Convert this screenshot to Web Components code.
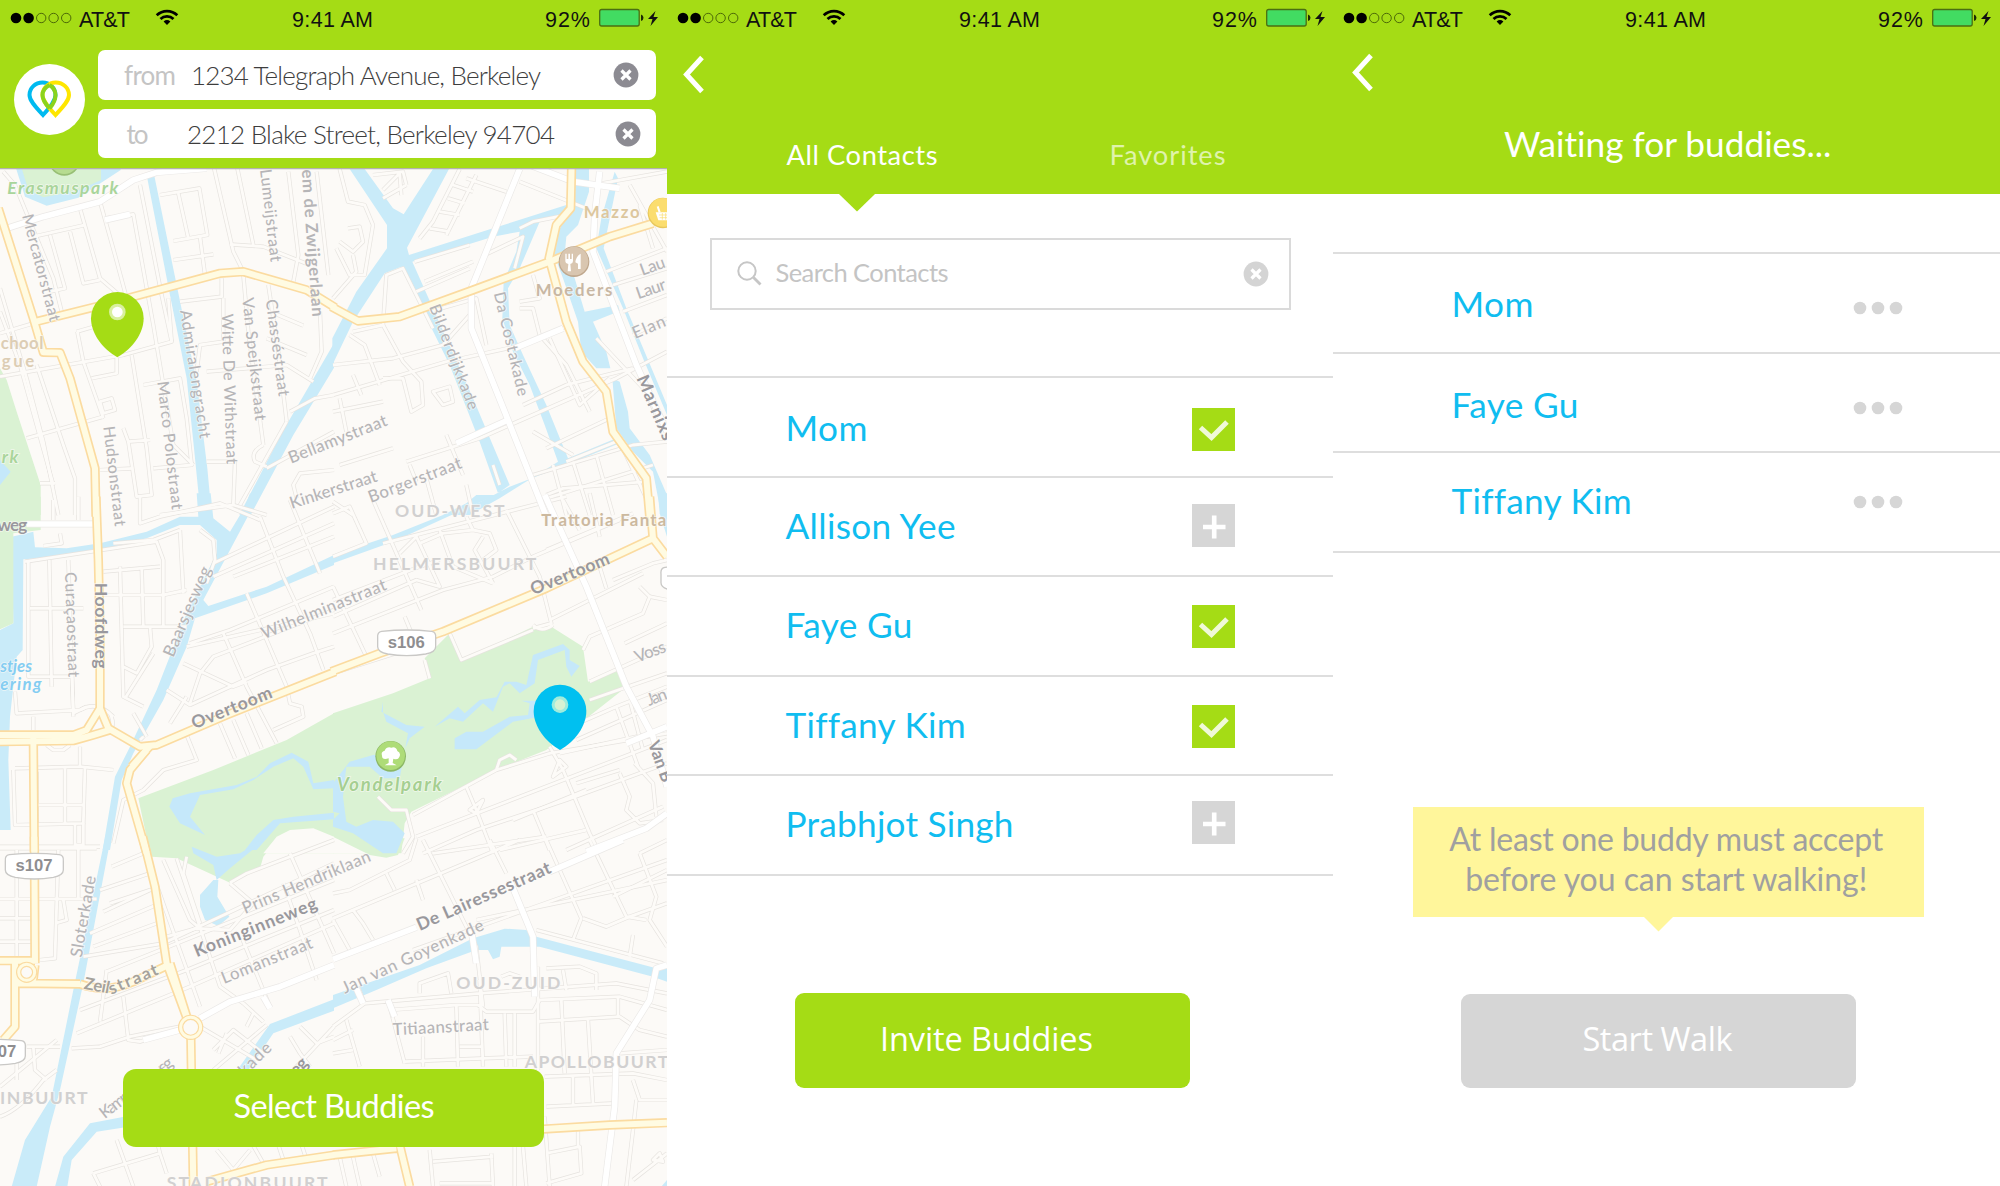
<!DOCTYPE html>
<html lang="en">
<head>
<meta charset="utf-8">
<title>Buddy walk</title>
<style>
html,body{margin:0;background:#fff}
body{width:2000px;height:1186px;overflow:hidden;font-family:Lato,"Liberation Sans",sans-serif}
</style>
</head>
<body>
<walk-app></walk-app>
<script>
const define = (name, html, setup) => {
  const t = document.createElement('template');
  t.innerHTML = html;
  customElements.define(name, class extends HTMLElement {
    constructor() {
      super();
      this.attachShadow({mode: 'open'}).append(t.content.cloneNode(true));
    }
    connectedCallback() { if (setup) setup(this, this.shadowRoot); }
  });
};

/* One line of text, tracked so that it fills the width given in w. */
define('fit-label', `<style>
  :host{display:block;white-space:nowrap;flex:none;line-height:40px}
  span{display:inline-block}
</style><span></span>`, (el, root) => {
  const s = root.querySelector('span');
  s.textContent = el.getAttribute('text');
  const w = +el.getAttribute('w');
  if (w) {
    const tune = () => {
      s.style.letterSpacing = '0';
      const n = s.getBoundingClientRect().width;
      s.style.letterSpacing = ((w - n) / (s.textContent.length - 1)) + 'px';
    };
    tune();
    document.fonts.ready.then(tune);
    el.style.width = w + 'px';
  }
});

define('status-bar', `<style>
  :host{display:flex;height:40px;align-items:flex-start;font:21.500px "Liberation Sans",sans-serif;color:#111;box-sizing:border-box}
  svg{display:block;flex:none}
</style>
<svg width="79" height="40"><circle cx="16" cy="18" r="5.3" fill="#000"/><circle cx="28.6" cy="18" r="5.3" fill="#000"/>
<g fill="none" stroke="#4d6a08" stroke-width="1"><circle cx="41.2" cy="18" r="4.7"/><circle cx="53.6" cy="18" r="4.7"/><circle cx="66.2" cy="18" r="4.7"/></g></svg>
<fit-label text="AT&amp;T" w="51"></fit-label>
<svg width="162" height="40"><g transform="translate(37 22)" fill="none" stroke="#000" stroke-width="2.7"><path d="M-10.3 -6.7A14.8 14.8 0 0 1 10.3 -6.7M-6.5 -3A9.2 9.2 0 0 1 6.5 -3"/><path d="M-3.4 -.6Q0 -3.3 3.4 -.6L0 3Z" fill="#000" stroke="none"/></g></svg>
<fit-label text="9:41 AM" w="81"></fit-label>
<svg width="172" height="40"></svg>
<fit-label text="92%" w="45"></fit-label>
<svg width="76" height="40"><rect x="9.7" y="9.5" width="39.500" height="16.500" rx="2" fill="#42dc62" stroke="#4a6f12" stroke-width="1.3"/><path d="M51 14.5v6.500q2.500-.5 2.500-3.200t-2.500-3.300Z" fill="#1c2a04"/><path d="M65.500 11l-7.500 8h4.500l-2 7 7.500-9h-4.500Z" fill="#111"/></svg>`);

define('clear-icon', `<style>:host{display:block;flex:none;width:26px;height:26px}svg{display:block}</style>
<svg width="26" height="26"><circle cx="13" cy="13" r="12.400" fill="currentColor"/><path d="M8.500 8.500l9 9M17.500 8.500l-9 9" stroke="#fff" stroke-width="3.200"/></svg>`);

define('back-button', `<style>:host{display:block;width:40px;height:40px}svg{display:block}</style>
<svg width="40" height="40"><path d="M29 2.500L13.500 19.500 29 36.500" fill="none" stroke="#fff" stroke-width="5"/></svg>`);

define('action-button', `<style>
  :host{display:flex;justify-content:center;align-items:center;box-sizing:border-box;color:#fff;background:var(--fill,#a5dc15);border-radius:var(--r,9px)}
</style><slot></slot>`);

define('address-field', `<style>
  :host{display:flex;height:49.500px;box-sizing:border-box;background:#fff;border-radius:7px;font-size:26px;align-items:flex-start}
  .k{color:#c4c4c4;font-weight:400}
  .v{color:#3d3d3d;font-weight:300}
  clear-icon{color:#8c8b92}
</style><fit-label class="k"></fit-label><fit-label class="v"></fit-label><clear-icon></clear-icon>`, (el, root) => {
  const d = JSON.parse(el.getAttribute('data'));
  const [k, v, c] = root.querySelectorAll('.k,.v,clear-icon');
  k.setAttribute('text', d.k); k.setAttribute('w', d.kw);
  v.setAttribute('text', d.v); v.setAttribute('w', d.vw);
  k.style.margin = '5px 0 0 ' + d.kx + 'px';
  v.style.margin = '5px 0 0 ' + d.vx + 'px';
  c.style.margin = '12px 0 0 ' + d.cx + 'px';
  k.replaceWith(k.cloneNode()); v.replaceWith(v.cloneNode());
});

define('walk-logo', `<style>:host{display:block;width:71px;height:71px;border-radius:50%;background:#fff}svg{display:block}</style>
<svg width="71" height="71" viewBox="14.500 64 71 71" fill="none" stroke-width="4">
<path d="M43.500 115C37 108 30 101 30 95A13 12.500 0 0 1 56 95C56 101 50 108 43.500 115Z" stroke="#00baf0"/>
<path d="M56 115C49.500 108 43 101 43 95A13.200 12.500 0 0 1 69.500 95C69.500 101 62.500 108 56 115Z" stroke="#fee600"/>
<path d="M50 85C45.500 87.500 43 91 43 95C43 99 46 104 50 108.500M50 85C54 87.500 56 91 56 95C56 99 54 104 50 108.500" stroke="#8bd31c"/></svg>`);

/* ---- map ---- */
const TILES = [
 {x:0,y:165,
  water:['M45 0L75 95 140 122 235 98 362 15V0Z','M441 35L463 32 532 370 590 650 622 910 635 1050H602L582 850 560 640 508 380Z','M1002 535V608L880 810 752 1050H718L845 805Z'],
  park:['M62 0L85 75 130 97 230 78 303 45V0Z','M0 610L20 645 50 740 122 960V1050H0Z'],
  pwater:['M0 885L32 920 0 960Z'],
  minor:['M10 20L45 60 160 340 190 460','M240 130L300 340 370 400','M300 110L345 270 380 400','M100 215L255 180M150 210L195 370 150 380M210 200L250 355 300 345','M315 160L400 148 460 480 520 840 580 900','M420 60L485 390 515 530','M480 90L598 70 622 210 520 228M535 85L565 220','M600 215L615 330M520 285L640 268','M640 0L700 260 725 310','M710 0L760 240M690 238L790 245 930 300','M865 20L895 270 880 350M950 20L985 330','M540 410L665 395V340M730 330L745 500 790 840','M805 360L835 560 860 770','M810 440L910 482M800 520L920 570','M0 505L100 475M0 635L370 570 515 530 505 400','M230 500L300 480M232 500L250 590 310 760','M275 640L350 625V575M300 710L335 700 345 735 310 745Z','M80 820L310 755M0 370L80 640 130 830 175 1050','M110 600L190 840 225 940V1050','M395 570L440 850 455 990 410 995 385 830 370 790M385 830L450 825','M430 660L540 640 560 760 575 900 460 910','M300 915L400 910M480 1050L700 1020 800 1050','M620 890H705L700 1020','M620 620L860 600 940 650','M790 840Q750 860 765 890L800 905','M870 740L945 700 1002 690M800 910L1002 800','M890 1000L880 960 900 925 1002 915','M860 770L720 1020','M120 955H165M0 440L60 600 160 960','M590 620L600 540 670 530V400','M930 640L965 560 960 440'],
  white:['M20 190L130 155 300 110 400 45 470 22 620 10','M315 165L390 148'],
  yellow:['M-5 130L100 460 130 562 180 563 210 640 285 910 288 1055','M100 472L300 422 660 325 730 320 920 375 1006 428'],
 },
 {x:333,y:165,
  water:['M50 12H95L180 130 212 148 300 12H348L222 248 228 270 480 190 700 120 706 145 620 170 560 310 525 370 530 480 570 570 640 720 705 880 850 820 860 835 700 900 530 965 440 1012 330 1050H410L500 1000 675 890 635 780 590 660 540 560 508 460 512 350 550 260 560 200 480 215 238 290 420 700 530 960 495 985 440 830 350 600 205 305 155 325 60 470 -2 600V520L70 380 162 250V180Z','M725 12H768V80L735 180 700 215 695 270 725 340 755 440 855 420 860 438 780 470 820 560 832 610 790 610 745 560 735 470 690 340 660 260 675 200 720 120Z','M845 20L805 160 790 250 870 430 930 580 1002 750V720L880 430 812 250 855 40Z','M838 640L860 650 885 740 890 790 950 870 1002 990V1050H985L960 920 900 860 850 790Z'],
  minor:['M20 12L45 110 95 120 120 180 95 330 50 330 10 250M45 190L80 185 90 230 60 260 20 230','M120 30L210 20 220 60M150 75L200 25 205 90M150 100L220 60','M380 12L300 170 260 220M430 30L340 210M360 60L420 80M345 100L395 115M320 140L380 150M290 190L350 200M400 40L520 80','M250 380L410 310M245 290L410 240','M275 350L420 290M455 270L570 215 545 310','M0 400L70 320 60 270M60 500L150 480 160 330 210 310 300 490','M150 480L210 590 265 650 270 720 235 740 210 640 150 640','M0 690L340 590 570 540M50 510L95 540 140 660M0 600L180 580 330 540 410 450','M290 440L430 400 460 540','M0 740L150 710M20 700L40 800M60 630L85 690M300 680L350 665 360 710 330 720Z','M20 900L180 850M220 890L440 820 850 640 1002 560','M340 810L390 930M230 900L250 950M560 190L600 170 700 150M600 330L620 400 560 410','M540 550L700 485M560 430L600 430 620 510 700 600 770 740','M650 520L740 720 830 640M570 720L700 660 900 610','M640 850L830 760M600 800L720 870M700 890L850 830M600 930L900 840 1002 830','M820 320L1002 250M840 360L1002 310M870 440L1002 390M900 510L1002 460M790 520L940 680 1002 830','M780 60L1002 20M890 60L1002 260M920 120L960 250M560 50L760 130','M660 900L700 1050M720 890L770 1050M790 870L840 1050M860 830L940 1000M640 1000L960 900M400 960L420 1050M280 940L310 1050M0 1010L60 1050M480 900L500 960','M640 990L690 970 940 950'],
  white:['M560 12L415 370 415 490 525 765 640 1055','M590 0L720 50 860 70M370 835L525 765','M800 20L785 150 780 260 910 600 1002 800','M545 550L690 490'],
  yellow:['M716 0L713 130 670 180 648 280 700 470 750 590 820 680 840 800 940 940 950 1055','M-5 425L75 468 200 455 420 375 650 290 830 215 960 175'],
 },
 {x:0,y:500,
  water:['M35 110L100 95 105 142 200 145 300 130 440 95 540 50 595 50 590 -20H632L640 55 690 95 735 20 750 -20 775 -10 690 150 610 300 625 318 800 260 1002 165V195L800 280 585 355 560 440 490 600 400 760 365 840 330 1050H308L345 830 390 740 470 570 560 340 650 160V120L600 75 540 75 440 115 300 150 200 170 70 178 68 450 50 470 30 650 25 780 32 990H0V390L40 370Z'],
  park:['M0 -10H122V90L40 100V370L0 388Z','M415 895L640 810 860 720 1002 640V1060H450Z'],
  pwater:['M518 895L570 880 710 855 770 830 810 790 875 758 925 785 940 850 1002 840V865L940 868 910 800 880 775 820 800 760 840 700 868 600 885 570 950 615 1005 540 970 508 920Z','M1002 938L880 950 820 960 770 1005 735 1050H770L840 970 1002 958Z'],
  bg:['M790 1060L830 1010 870 990 940 985 1002 1010V1060Z'],
  minor:['M75 185L470 125 490 180 490 380','M85 180V530H215M148 180L155 560M205 180L220 650M90 325H250','M160 0V60M235 -10V60M45 575L50 640 240 630M215 500L220 640 260 620','M310 215L480 200M360 200L370 590 430 620M425 200L430 380M370 380H560M310 285H490L560 270','M370 500L410 520 455 440 450 380M375 595L460 460','M540 90L550 280M340 130L460 120 540 90M180 100L185 130 130 138','M420 -10V70L480 50 660 10 780 60','M780 50L850 230 930 400 970 510M870 0L910 100 960 220M740 280L860 560 870 610 905 620 910 650 820 690','M670 400L740 560 830 730M700 230L1002 110M640 230L1002 70M640 190L1002 20M570 430L690 390 1002 260M560 440L1002 340','M550 490L700 560 740 545M500 570L570 615 800 510 940 460 1002 440','M570 610L600 520 640 470 1002 330M510 670L560 590M660 670L705 775M700 660L745 765M740 640L785 745','M560 705L590 780 490 810 430 870 370 900 340 1030','M45 805L240 800 340 810M240 740V800M255 800L250 970 45 975 40 810M110 815V970M110 915H255M195 800V970M0 1040H300','M225 970V1035H250V970M100 650V690M140 735L160 750 190 750 210 735','M430 710L420 720M400 640L440 710M600 90L640 120 645 180 620 250','M330 640Q350 680 320 700M240 630Q290 600 340 650'],
  white:['M80 72H285'],
  yellow:['M288 -10L295 180 300 400 300 625M0 705H220L260 690 300 625 325 685 420 740 470 735 680 645 1006 515M0 725L220 722 280 705 330 690M440 750L390 810 380 850 440 1060','M450 738L395 800M100 710L103 1055'],
 },
 {x:333,y:500,
  water:['M0 165L180 105 330 45 400 10 430 -15H490L400 25 180 125 0 190Z','M975 -20L1002 -20V110L980 40Z'],
  park:['M0 640L180 580 290 535 275 475 350 400 390 480 600 380 655 380 750 440 765 545 855 505 875 565 640 750 490 810 235 935 215 970 205 1060H0Z'],
  pwater:['M150 605L145 635 220 675 275 680 230 715 210 760 120 765 50 785 0 850V935L20 940 0 960V980L60 1000 150 1060H190L215 1000 180 965 120 960 70 980 40 965 30 890 40 800 110 800 150 835 200 835 225 700 160 665 150 635Z','M305 680L375 620 395 640 440 600 490 592 515 545 550 545 580 555 600 465 690 432 710 450 710 480 740 498 715 530 700 500 695 450 615 480 605 550 560 580 530 550 510 560 480 635 450 610 390 665 350 655Z','M365 715L400 695 450 695 530 650 585 645 590 610 565 602H620V650L540 665 430 748H365Z'],
  bg:['M0 1010L100 1060H0Z'],
  minor:['M0 40L50 20 100 130 0 170M120 0L230 250 265 330M0 260L100 470M215 350L240 410M0 350L250 240 320 260 250 110 200 160','M0 300L260 200 320 180M0 400L330 270 480 230 600 170 860 60','M520 30L620 230 655 370 600 385M400 50L420 90 470 100 490 150 450 180M260 130L330 100 420 90','M450 110L425 150 480 250M320 90L360 200 480 250M150 130L700 -10','M770 -20L800 110M690 0L740 90M640 150L900 40','M350 400L385 480 600 390M275 480L290 535M600 375Q625 400 660 375','M650 360L930 220M750 450L770 410 930 340 950 290 920 260M800 200L820 265M840 240L960 190 1002 180','M875 430L1002 370M770 545L1002 440M770 600L870 565 1002 520','M950 290L1002 300','M690 690L850 620 1002 560M730 720L1002 600M680 760L1002 690M850 620L915 800M890 600L930 750','M490 810L500 780 530 765 550 780','M650 740L690 810 770 1000 800 1060M660 830L700 800 680 780Z','M400 860L430 930 480 1060M410 930L450 900 430 940Z','M240 945L490 810 650 760 1002 700','M250 1010L1002 720M270 1060L430 990 700 900 1002 790','M600 930L650 1050M860 820L890 890 880 930 920 970 990 960M540 960L760 870M700 1050L990 920','M905 790L960 850 970 950M730 850L860 810','M135 890L175 930 220 930 240 1010 210 1060M500 1050L760 990M0 520L250 440'],
  white:['M635 -15L760 260 880 560 960 710 1002 860','M760 1055L940 985 1002 940','M880 730L1002 680'],
  yellow:['M-5 515L140 460 330 395 640 265 960 115 1002 170M950 -10L960 115'],
 },
 {x:0,y:840,
  water:['M315 -5H332L250 430 180 750 150 860 110 1040H35L75 900 155 770 220 450Z','M640 120H655L652 170 688 230 655 258 615 240 600 200V165Z','M1002 478V512L820 580 745 690H712L810 552Z','M400 825L270 850 190 950 165 1040H202L215 960 290 875 400 858Z'],
  park:['M445 -10L455 50 530 55 690 128 780 85 790 50 830 0V-10Z'],
  pwater:['M575 20L650 50 720 40 770 10 780 -5H800L690 85 650 120 640 75 580 40Z'],
  minor:['M0 25H290M50 30V360M175 30L165 355 120 360M0 177H290M0 235H110M0 305H110M235 25V175M190 180L200 240 165 250','M335 80L430 40M310 215L450 150 330 190M300 150L450 100M280 320L470 250M270 280L480 190M250 350L490 310 1002 70M320 395L1002 120M320 390L300 545M240 510L560 390 1002 210M230 580L570 440 1002 250','M215 625L300 620 390 590 540 560M370 470L385 600 420 605 530 570M490 60L570 240 600 265M530 55L660 440 730 490 790 545','M500 290L590 265 690 270 760 190 690 130','M560 50L550 100 600 250M720 280L810 500M900 270L950 420M440 50L600 500','M850 130L900 270M870 40L1002 340M690 128L740 100 1002 0','M600 560L770 660M640 630L700 570 790 640M655 640L680 580M740 560L760 520M800 555L640 690','M870 590L900 640 930 680M900 560L950 610 1002 590M880 690L1002 560M650 930L700 990 750 930M750 900L790 970','M50 620V720M100 620L105 690 140 720M80 620H180M0 830Q60 810 130 720L170 690M280 1000L480 940 470 900M280 1000L300 1040M350 900L400 1040M480 940L500 1000','M830 900L850 960M900 900L920 960','M0 740L170 600'],
  white:['M600 535L690 485 840 440 1002 375','M430 600L540 570','M790 470L810 505'],
  yellow:['M103 -10L105 370M0 362H105M45 365V560L10 600M50 430L240 432M105 375L100 415 60 415 45 380M240 432Q320 460 400 425L505 375M428 -10L465 140 500 370 570 560M570 560L510 370M572 560L580 1040M620 1025L800 975 1002 945'],
  ring:[[572,562,30],[80,397,24]],
 },
 {x:333,y:840,
  water:['M0 465L260 375 420 295 515 266 580 270 610 290 990 390 1002 375V425L960 410 620 320 505 320 500 350 480 358 465 330 430 330 280 385 130 450 0 505Z','M985 1040L1002 1020V1040Z'],
  park:['M0 -5H215L195 45 160 53 110 45 0 -3Z'],
  pwater:['M80 -5H208L180 35 150 5Z'],
  minor:['M0 160L50 150 230 60 250 -5M270 0L400 260 430 320 450 500M470 0L520 100M640 0L745 235 720 300M770 0L880 230 940 240M0 235L420 60 560 0M240 330L1002 60M430 240L1002 120M60 210L90 250 120 300M160 100L185 150M250 120L270 180M0 240L50 330M300 40L640 -10','M920 40L970 170 950 240 1002 320M750 235L820 260 890 230 1002 190M900 285L890 350M610 270L990 370','M920 40L1002 0M840 170L1002 90','M75 440L95 490 0 560M95 490L440 460 850 430 1002 460M165 480L215 670M40 540L80 680M170 510L370 495 435 495 460 515H600L620 480 860 470 1002 510M260 460V430L345 400 355 460M440 420L450 680M505 410L530 400 560 410','M615 380V690M640 385L740 380 790 400V450M690 390L700 450M615 545L860 530 920 570 1002 590M855 470V530M685 480L695 700M765 540L780 790M370 495L375 680M515 520L520 680M545 520V680M215 665L450 655 600 650M380 620H450M270 590V680M635 710L900 700 1002 720M640 800L840 790M720 710V795M0 640L60 630M0 600L60 570','M0 950L160 930M20 950L40 1040M60 950L80 1040M120 940L140 1010M290 930L300 1040M300 965L480 950M475 940L480 1040M320 1030H480M545 920V1040M570 920L580 1040M640 940L740 920 745 1000 640 1030M635 830L650 1040M735 860V920M900 720L920 780H1002M910 780L900 870 880 1040M860 640L1002 630','M900 1020L1002 940M980 940L960 960 990 965Z'],
  white:['M0 358L250 262M650 95L870 0','M530 120L600 290 605 470','M1002 375L970 385 950 480 850 640 845 800 815 1040','M70 445L90 490M165 480L185 530','M415 270L430 370'],
  yellow:['M620 868L830 855 1002 848M0 945L190 925M200 915L230 1040'],
 },
];
/* tile, text, x1,y1 → x2,y2 of the baseline (tile units), size, weight, colour, style */
const G='#b6b5b7',D='#99989d',P='#d1d0d0';
const LABELS = [
 [0,'Erasmuspark',22,88,355,88,44,700,'#a9d59b','italic'],
 [0,'Mercatorstraat',66,152,150,472,40,400,G],
 [0,'Lumeijstraat',780,14,812,292,40,400,G],
 [0,'em de Zwijgerlaan',905,14,937,456,42,700,G],
 [0,'Admiralengracht',540,437,600,822,40,400,G],
 [0,'Chasséstraat',797,405,836,695,40,400,G],
 [0,'Van Speijkstraat',727,400,766,768,40,400,G],
 [0,'Witte De Withstraat',665,447,680,898,40,400,G],
 [0,'Marco Polostraat',472,650,516,1035,40,400,G],
 [0,'Hudsonstraat',310,785,345,1085,40,400,G],
 [0,'Bellamystraat',873,896,1165,780,42,400,G],
 [0,'Kinkerstraat',875,1032,1135,948,42,400,G],
 [0,'chool',2,552,130,552,42,700,'#dccdb4'],
 [0,'gue',5,605,103,605,42,700,'#dccdb4'],
 [0,'rk',5,894,55,894,44,700,'#a9d59b','italic'],
 [1,'Mazzo',752,160,920,160,42,700,'#dcc79e'],
 [1,'Moeders',608,394,838,394,42,700,'#c8b7a3'],
 [1,'Lau',928,332,1000,306,42,400,G],
 [1,'Laur',916,403,1002,373,42,400,G],
 [1,'Elan',906,522,1002,482,42,400,G],
 [1,'Da Costakade',482,385,556,696,40,400,G],
 [1,'Bilderdijkkade',288,425,408,738,40,400,G],
 [1,'Marnixs',910,640,992,830,44,700,D],
 [1,'Borgerstraat',113,1014,390,908,42,400,G],
 [2,'weg',-8,94,82,94,44,700,D],
 [2,'Curaçaostraat',195,217,205,532,40,400,G],
 [2,'Hoofdweg',285,248,285,506,44,700,D],
 [2,'Baarsjesweg',520,474,634,208,42,400,G],
 [2,'Wilhelminastraat',792,418,1163,268,42,400,G],
 [2,'stjes',1,516,96,516,42,700,'#84cdf2','italic'],
 [2,'ering',1,570,124,570,42,700,'#84cdf2','italic'],
 [2,'Overtoom',583,688,820,592,44,700,D],
 [3,'OUD-WEST',186,50,515,50,44,400,P,'w'],
 [3,'HELMERSBUURT',120,210,610,210,44,400,P,'w'],
 [3,'Trattoria Fanta',625,77,1000,77,42,700,'#ccb99f'],
 [3,'Overtoom',601,286,834,190,44,700,D],
 [3,'Voss',913,488,1002,454,42,400,G],
 [3,'Jan',948,618,1006,596,42,400,G],
 [3,'Van B',944,730,988,850,42,700,D],
 [3,'Vondelpark',12,872,326,872,46,700,'#a5cf91','italic'],
 [4,'Prins Hendriklaan',735,222,1116,62,42,400,G],
 [4,'Koninginneweg',590,352,955,205,44,700,D],
 [4,'Lomanstraat',672,432,942,322,42,400,G],
 [4,'Sloterkade',245,354,288,110,42,400,G],
 [4,'Zeil',250,446,326,461,42,700,'#a5a29b'],
 [4,'straat',334,464,478,402,42,700,'#a5a29b'],
 [4,'Kamperfoelieweg',314,838,523,675,42,400,G],
 [4,'kade',735,710,818,627,42,400,G],
 [4,'weg',862,740,928,672,44,700,D],
 [4,'INBUURT',0,791,263,791,44,400,P,'w'],
 [4,'STADIONBUURT',500,1047,983,1047,44,400,P,'w'],
 [5,'De Lairessestraat',260,273,658,97,44,700,D],
 [5,'Jan van Goyenkade',35,462,456,268,42,400,G],
 [5,'OUD-ZUID',370,447,682,447,44,400,P,'w'],
 [5,'Titiaanstraat',180,586,468,570,42,400,G],
 [5,'APOLLOBUURT',575,685,1006,685,44,400,P,'w'],
];

define('street-map', `<style>
  :host{display:block;overflow:hidden}
  svg{display:block;font-family:Lato,sans-serif}
  path{stroke-linejoin:round}
</style><div></div>`, (el, root) => {
  const at = t => `transform="translate(${t.x} ${t.y}) scale(.33333)"`;
  const layer = (key, attrs) => TILES.map(t => (t[key] || []).length
    ? `<g ${at(t)} ${attrs}>` + t[key].map(d => `<path d="${d}"/>`).join('') + '</g>' : '').join('');
  const line = (key, c, w) => layer(key, `fill="none" stroke="${c}" stroke-width="${w}"`);
  let s = '<rect y="160" width="667" height="1030" fill="#fcfaf7"/>';
  s += layer('water', 'fill="#c9ebf9"') + layer('park', 'fill="#daf2d3"') + layer('pwater', 'fill="#c5e8fa"') + layer('bg', 'fill="#fcfaf7"');
  s += line('minor', '#e6e3df', 12.5) + line('minor', '#fdfbf8', 8.5);
  s += line('white', '#ebe9e7', 21) + line('white', '#fff', 17);
  s += line('yellow', '#fbdba0', 28) + line('yellow', '#fffbe2', 18);
  for (const t of TILES) for (const [x, y, r] of t.ring || [])
    s += `<g ${at(t)}><circle cx="${x}" cy="${y}" r="${r}" fill="#fcfaf7" stroke="#fbdba0" stroke-width="16"/><circle cx="${x}" cy="${y}" r="${r}" fill="none" stroke="#fffbe2" stroke-width="9"/></g>`;
  const disc = (i, x, y, c, e, glyph) => `<g ${at(TILES[i])}><circle cx="${x}" cy="${y + 2}" r="46" fill="${e}"/><circle cx="${x}" cy="${y}" r="43" fill="${c}"/><g transform="translate(${x} ${y})" fill="#fff">${glyph}</g></g>`;
  s += disc(0, 193, -16, '#b6dc90', '#98bf75', '');
  s += disc(1, 990, 142, '#fbdd6e', '#e8c75c', '<path d="M-22 0H26L20 24H-14Z"/><path d="M-10 0L-16 -18" stroke="#fff" stroke-width="6"/><path d="M-12 8H20M-10 16H18M-2 2V22M8 2V22" stroke="#fbdd6e" stroke-width="2"/>');
  s += disc(1, 723, 288, '#d9c6b0', '#bfa78d', '<path d="M-26 -22h4v16h5v-16h5v16h5v-16h4v22q0 7-8 9l2 22h-10l2-22q-9-2-9-9ZM20 -22V24H12V8L4 4Q6-14 20-22Z"/>');
  s += disc(3, 173, 767, '#aedc78', '#8cb765', '<path d="M-6 8Q-26 14-26 0Q-30-12-18-15Q-12-28 2-24Q16-28 20-14Q32-8 26 4Q22 14 8 9L6 22 18 29H-18L-6 22Z"/>');
  s += LABELS.map(([i, text, x1, y1, x2, y2, size, weight, color, style]) => {
    const a = Math.atan2(y2 - y1, x2 - x1) * 180 / Math.PI, n = Math.hypot(x2 - x1, y2 - y1);
    const wt = style === 'w' ? 700 : weight === 400 ? 500 : weight;
    return `<g ${at(TILES[i])}><text transform="translate(${x1} ${y1}) rotate(${a.toFixed(2)})" textLength="${n.toFixed(1)}" font-size="${(size * 1.2).toFixed(1)}" font-weight="${wt}" ${style === 'italic' ? 'font-style="italic"' : ''} fill="${color}" stroke="#fcfaf7" stroke-width="5" stroke-opacity=".7" paint-order="stroke">${text}</text></g>`;
  }).join('');
  const shield = (i, x, y, w, text, tx) => `<g ${at(TILES[i])}><path d="M${x + 12} ${y}Q${x + w / 2} ${y - 8} ${x + w - 12} ${y}Q${x + w + 2} ${y + 2} ${x + w} ${y + 20}V${y + 46}Q${x + w} ${y + 62} ${x + w - 30} ${y + 68}Q${x + w / 2} ${y + 78} ${x + 30} ${y + 68}Q${x} ${y + 62} ${x} ${y + 46}V${y + 20}Q${x - 2} ${y + 2} ${x + 12} ${y}Z" fill="#fff" stroke="#c9c8c6" stroke-width="4"/>${text && `<text x="${tx}" y="${y + 50}" text-anchor="middle" font-family="Liberation Sans" font-weight="700" font-size="50" fill="#8f8e90">${text}</text>`}</g>`;
  s += shield(3, 134, 394, 174, 's106', 220) + shield(4, 16, 44, 174, 's107', 102) + shield(4, -98, 602, 174, '07', 21) + shield(3, 984, 202, 174, '', 0);
  const pin = (i, x, y, c, ring, dot) => `<g ${at(TILES[i])}><path d="M${x} ${y + 117}C${x - 45} ${y + 92} ${x - 79} ${y + 45} ${x - 79} ${y}A79 79 0 0 1 ${x + 79} ${y}C${x + 79} ${y + 45} ${x + 45} ${y + 92} ${x} ${y + 117}Z" fill="${c}"/><circle cx="${x}" cy="${y - 19}" r="25" fill="${ring}"/><circle cx="${x}" cy="${y - 19}" r="16" fill="${dot}"/></g>`;
  s += pin(0, 352, 460, '#a5dc15', '#d9f0a0', '#fff') + pin(3, 681, 633, '#00c0f0', '#a0ecdd', '#d9f2d3');
  s += '<path d="M0 168.500H667" stroke="#b3b3ad" stroke-width="1.500"/>';
  root.querySelector('div').innerHTML = `<svg width="667" height="1018" viewBox="0 168 667 1018">${s}</svg>`;
});

define('route-screen', `<style>
  :host{display:grid;grid-template-rows:168px 1018px;width:667px;height:1186px;overflow:hidden}
  header{background:#a5dc15}
  .top{display:flex;margin-top:10px}
  walk-logo{margin:14px 0 0 13.500px}
  .fields{display:flex;flex-direction:column;gap:9px;width:558px;margin-left:13.500px}
  main{display:grid}
  street-map,action-button{grid-area:1/1}
  action-button{--r:13px;width:421px;height:78px;margin:901px 0 0 123px;font-size:32.500px;padding:0 0 4px 1px}
</style>
<header><status-bar></status-bar><div class="top"><walk-logo></walk-logo><div class="fields">
<address-field data='{"k":"from","kw":52,"kx":26,"v":"1234 Telegraph Avenue, Berkeley","vw":350,"vx":15,"cx":71.500}'></address-field>
<address-field data='{"k":"to","kw":22,"kx":28.500,"v":"2212 Blake Street, Berkeley 94704","vw":368,"vx":38.500,"cx":60}'></address-field>
</div></div></header>
<main><street-map></street-map><action-button><fit-label text="Select Buddies" w="201"></fit-label></action-button></main>`);

define('contact-row', `<style>
  :host{display:flex;height:99.500px;box-sizing:border-box;border-top:2.500px solid #dedede;align-items:flex-start;font-size:35.200px;color:#10bdf0}
  svg{display:block;flex:none}
  .space{flex:1}
</style><fit-label></fit-label><span class="space"></span><svg></svg>`, (el, root) => {
  const g = k => el.getAttribute(k);
  const old = root.querySelector('fit-label'), label = document.createElement('fit-label');
  label.setAttribute('text', g('name')); label.setAttribute('w', g('w'));
  label.style.margin = `${g('ty')}px 0 0 118.5px`;
  old.replaceWith(label);
  const svg = root.querySelector('svg'), kind = g('kind');
  svg.style.margin = `${g('iy')}px ${kind === 'wait' ? 97 : 98.5}px 0 0`;
  svg.setAttribute('width', kind === 'wait' ? 50 : 43);
  svg.setAttribute('height', kind === 'wait' ? 14 : 43);
  svg.innerHTML = kind === 'wait'
    ? '<g fill="#d6d6d6"><circle cx="7" cy="7" r="6.3"/><circle cx="25" cy="7" r="6.3"/><circle cx="43" cy="7" r="6.3"/></g>'
    : kind === 'on'
    ? '<rect width="43" height="43" fill="#a5dc15"/><path d="M8.500 19.500L19.500 29.500 35 14" fill="none" stroke="#f0f9d8" stroke-width="5"/>'
    : '<rect width="43" height="43" fill="#d6d6d6"/><path d="M11 23H33.500M22.200 11.500V34.500" stroke="#fff" stroke-width="4.600"/>';
});

define('contacts-screen', `<style>
  :host{display:flex;flex-direction:column;width:666px;height:1186px;background:#fff;overflow:hidden}
  header{background:#a5dc15;height:193.500px;flex:none}
  back-button{margin:15px 0 0 6px}
  .tabs{display:flex;font-size:27.300px;color:#fff;margin:40px 0 0 119.500px}
  .off{color:#dff3ab;margin-left:172px}
  .arrow{display:block;margin-left:172px;flex:none}
  .search{display:flex;align-items:flex-start;box-sizing:border-box;flex:none;width:581px;height:71.500px;margin:26.500px 0 0 43px;border:2px solid #dadada;color:#c4c4c4;font-size:25.500px}
  .search fit-label{margin:12px 0 0 11.500px}
  .search clear-icon{margin:20.500px 0 0 294px;color:#d4d4d4}
  .list{margin-top:66.500px;border-bottom:2.500px solid #dedede}
  action-button{width:395px;height:94.500px;margin:117.500px 0 0 128px;font:32.500px "Open Sans","Noto Sans",sans-serif;padding:0 12px 3px 0;flex:none}
</style>
<header><status-bar></status-bar><back-button></back-button>
<div class="tabs"><fit-label text="All Contacts" w="151"></fit-label><fit-label class="off" text="Favorites" w="116"></fit-label></div></header>
<svg class="arrow" width="36" height="18"><path d="M0 0H36L18 17.500Z" fill="#a5dc15"/></svg>
<div class="search"><svg width="52" height="60"><circle cx="35" cy="31" r="8.700" fill="none" stroke="#c6c6c6" stroke-width="2"/><path d="M41.500 37.500L48.500 44.500" stroke="#c6c6c6" stroke-width="2.800"/></svg><fit-label text="Search Contacts" w="173"></fit-label><clear-icon></clear-icon></div>
<div class="list">
<contact-row name="Mom" w="82" ty="29" iy="30" kind="on"></contact-row>
<contact-row name="Allison Yee" w="170" ty="27" iy="26.500" kind="off"></contact-row>
<contact-row name="Faye Gu" w="127" ty="27" iy="28" kind="on"></contact-row>
<contact-row name="Tiffany Kim" w="179" ty="27" iy="28.500" kind="on"></contact-row>
<contact-row name="Prabhjot Singh" w="228" ty="27" iy="25" kind="off"></contact-row>
</div>
<action-button><fit-label text="Invite Buddies" w="213"></fit-label></action-button>`);

define('waiting-screen', `<style>
  :host{display:flex;flex-direction:column;width:667px;height:1186px;background:#fff;overflow:hidden}
  header{background:#a5dc15;height:193.500px;flex:none}
  back-button{margin:13px 0 0 9px}
  h1{margin:30px 0 0 171px;font:400 35.200px Lato,sans-serif;color:#fff}
  .list{margin-top:58.500px;border-bottom:2.500px solid #dedede}
  .tip{display:flex;flex-direction:column;flex:none;align-items:center;box-sizing:border-box;width:510.500px;height:110px;margin:254px 0 0 80px;background:#fff69b;color:#a0a0a0;font-size:32px;padding:12.500px 4px 0 0}
  .tip fit-label{line-height:39.500px}
  .arrow{display:block;margin-left:311px;flex:none}
  action-button{--fill:#d6d6d6;width:395px;height:94.500px;margin:62px 0 0 128px;font:32.500px "Open Sans","Noto Sans",sans-serif;padding:0 2px 4px 0;flex:none}
</style>
<header><status-bar></status-bar><back-button></back-button><h1><fit-label text="Waiting for buddies..." w="328"></fit-label></h1></header>
<div class="list">
<contact-row name="Mom" w="82" ty="28.500" iy="47" kind="wait"></contact-row>
<contact-row name="Faye Gu" w="127" ty="30" iy="47" kind="wait"></contact-row>
<contact-row name="Tiffany Kim" w="179" ty="26.500" iy="41.500" kind="wait"></contact-row>
</div>
<div class="tip"><fit-label text="At least one buddy must accept" w="434"></fit-label><fit-label text="before you can start walking!" w="402"></fit-label></div>
<svg class="arrow" width="29" height="15"><path d="M0 0H29L14.500 14.500Z" fill="#fff69b"/></svg>
<action-button><fit-label text="Start Walk" w="150"></fit-label></action-button>`);

define('walk-app', `<style>:host{display:flex;width:2000px;height:1186px;overflow:hidden}</style>
<route-screen></route-screen><contacts-screen></contacts-screen><waiting-screen></waiting-screen>`);
</script>
</body>
</html>
